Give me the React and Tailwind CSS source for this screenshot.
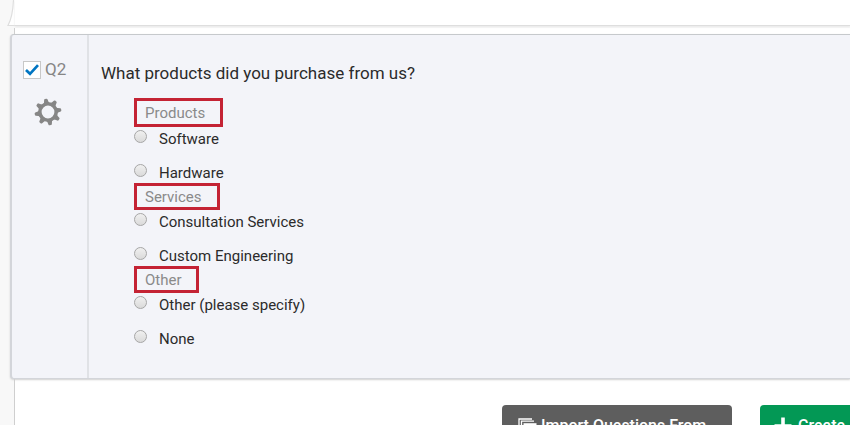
import React, { useState } from 'react';
import clsx from 'clsx';

const groups = [
  { title: 'Products', box: 'h-[29px] w-[89px]', choices: ['Software', 'Hardware'] },
  { title: 'Services', box: 'h-[27px] w-[86px]', choices: ['Consultation Services', 'Custom Engineering'] },
  { title: 'Other', box: 'h-[27px] w-[65px]', choices: ['Other (please specify)', 'None'] },
];

const GearIcon = () => (
  <svg width="28" height="28" viewBox="0 0 28 28" aria-hidden="true">
    <g transform="rotate(-10 14 14)" fill="#868686">
      {[0, 45, 90, 135, 180, 225, 270, 315].map((angle) => (
        <path key={angle} d="M11.2 6 L12.3 1.4 Q12.5 0.6 13.3 0.6 H14.7 Q15.5 0.6 15.7 1.4 L16.8 6 Z" transform={`rotate(${angle} 14 14)`} />
      ))}
    </g>
    <circle cx="14" cy="14" r="8.2" fill="none" stroke="#868686" strokeWidth="3.6" />
  </svg>
);

const StackIcon = () => (
  <svg width="19" height="16" viewBox="0 0 19 16" fill="none" aria-hidden="true">
    <path d="M1 11V1H14" stroke="#fff" strokeWidth="1.3" />
    <path d="M3.5 13V3.2H16" stroke="#fff" strokeWidth="1.3" />
    <path d="M5.5 5.2H18.5V15.5H5.5Z" fill="#fff" />
  </svg>
);

const PlusIcon = () => (
  <svg width="18" height="18" viewBox="0 0 18 18" aria-hidden="true">
    <path d="M7.2 0.5H10.8V7.2H17.5V10.8H10.8V17.5H7.2V10.8H0.5V7.2H7.2Z" fill="#fff" />
  </svg>
);

const SheetEdge = () => (
  <svg className="block shrink-0" width="15" height="28" viewBox="0 0 15 28" aria-hidden="true">
    <path d="M13.5 0C13 11 11.5 19 8 25.5H15V0Z" fill="#fff" />
    <path d="M13.5 0C13 11 11.5 19 8 25.5H15" fill="none" stroke="#dedede" strokeWidth="1.2" />
  </svg>
);

const App = () => {
  const [selected, setSelected] = useState(true);
  const [answer, setAnswer] = useState('');

  return (
    <div className="min-h-screen overflow-hidden bg-[#f8f8f8] font-['Roboto','Liberation_Sans',sans-serif] text-[#2b2b2b]">
      <header className="flex h-7">
        <SheetEdge />
        <div className="h-[26px] flex-1 border-b border-[#dedede] bg-white shadow-[0_1px_2px_#e8e8e8]"></div>
      </header>

      <main className="ml-3.5 border-l border-[#cfcfcf] bg-white pt-1.5">
        <section className="-ml-[5px] flex rounded-l-sm border-y border-l-2 border-[#d3d5da] border-t-[#c6c9cc] bg-[#f3f4f9] shadow-[0_1px_2px_#d0d0d0]">
          <div className="flex w-[77px] shrink-0 flex-col border-r-2 border-[#e0e2e6] pt-[25px] pl-[11px]">
            <label className="flex h-5 items-center gap-1 text-[17px] text-[#868686]">
              <span className="relative flex size-[18px]">
                <input
                  type="checkbox"
                  checked={selected}
                  onChange={(e) => setSelected(e.target.checked)}
                  className="size-[18px] appearance-none border border-[#c8c8c8] bg-white"
                />
                {selected && (
                  <svg className="pointer-events-none absolute inset-0" width="18" height="18" viewBox="0 0 18 18" aria-hidden="true">
                    <path d="M3 9L7 12.8L15 4.2" fill="none" stroke="#0075c2" strokeWidth="2.7" />
                  </svg>
                )}
              </span>
              Q2
            </label>
            <button type="button" aria-label="Question options" className="mt-[18px] ml-[11px] size-7">
              <GearIcon />
            </button>
          </div>

          <div className="min-w-0 flex-1 pt-7 pb-[29px] pl-3">
            <h1 className="text-[17px] leading-5">What products did you purchase from us?</h1>
            <div className="mt-[15px] ml-[33px] text-[15px]">
              {groups.map((group) => (
                <fieldset key={group.title}>
                  <legend className={clsx('flex items-center border-3 border-[#c42334] pt-0.5 pl-2 text-[#8a8a8a]', group.box)}>
                    {group.title}
                  </legend>
                  <div className="flex flex-col gap-3">
                    {group.choices.map((choice) => (
                      <label key={choice} className="flex h-[22px] items-start gap-3 leading-6">
                        <input
                          type="radio"
                          name="purchase"
                          checked={answer === choice}
                          onChange={() => setAnswer(choice)}
                          className="mt-[3px] size-[13px] appearance-none rounded-full border border-[#a6a6a6] bg-linear-to-b from-[#f0f0f0] to-[#dadada] checked:bg-[#0075c2]"
                        />
                        {choice}
                      </label>
                    ))}
                  </div>
                </fieldset>
              ))}
            </div>
          </div>
        </section>

        <div className="mt-[26px] -mr-10 flex justify-end gap-7 text-[16px] font-medium text-white">
          <button type="button" className="flex h-[42px] w-[230px] items-center gap-1 rounded-sm bg-[#5e5e5e] pl-4">
            <StackIcon />
            Import Questions From...
          </button>
          <button type="button" className="flex h-[42px] w-[130px] items-center gap-1.5 rounded-sm bg-[#039855] pl-3.5">
            <PlusIcon />
            Create
          </button>
        </div>
      </main>
    </div>
  );
};

export default App;
